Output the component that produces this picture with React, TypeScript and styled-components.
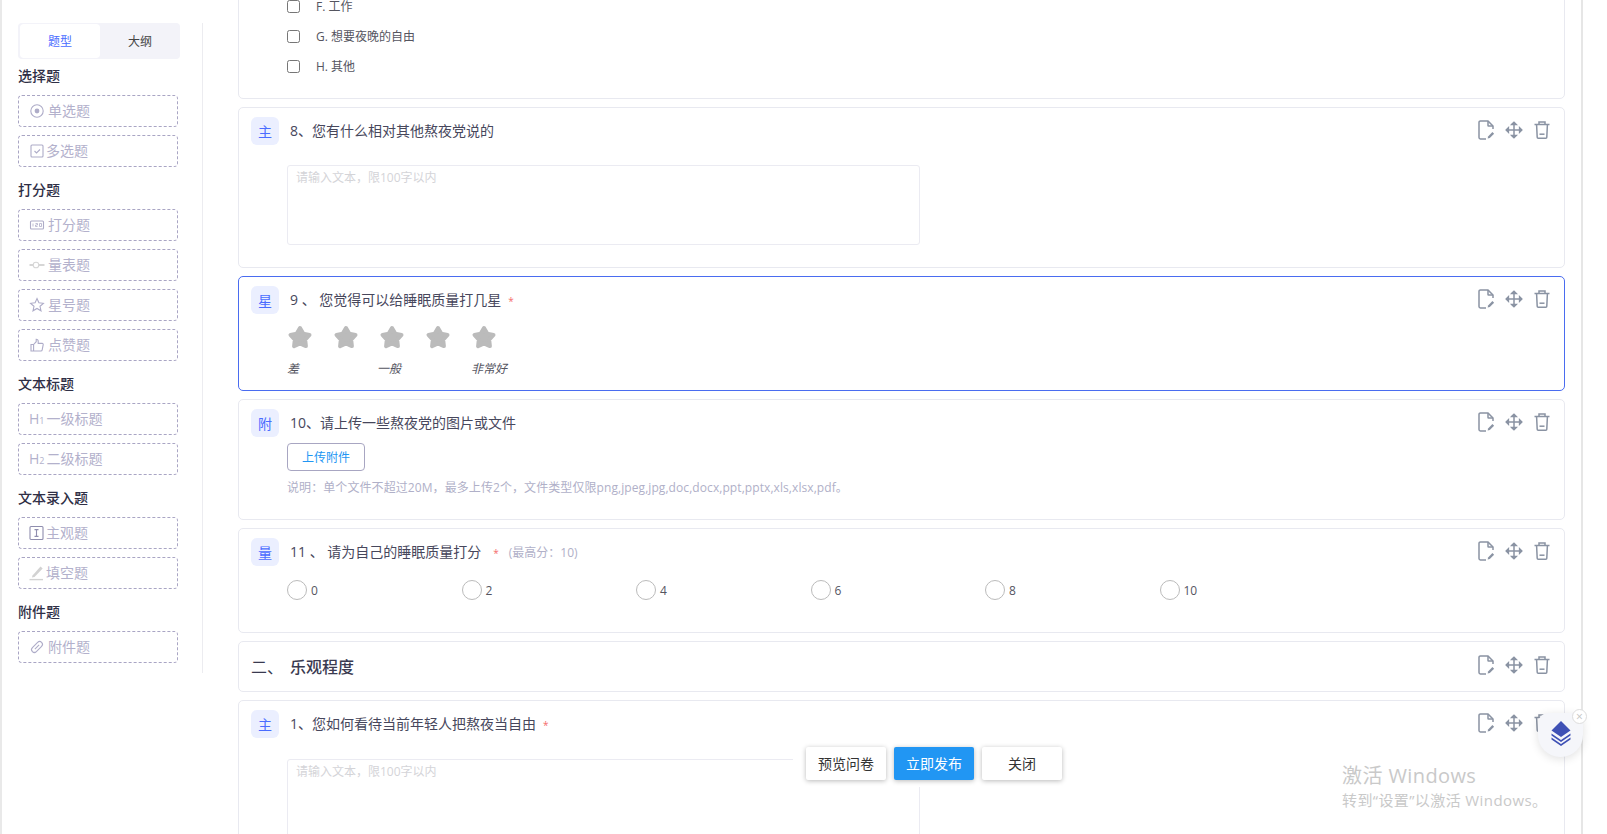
import React from 'react';
import styled, { createGlobalStyle } from 'styled-components';

const GlobalStyle = createGlobalStyle`
  html, body { margin: 0; padding: 0; height: 834px; overflow: hidden; background: #fff; }
  body { font-family: "Open Sans", "Noto Sans CJK SC", sans-serif; }
  * { box-sizing: border-box; }
`;

type IconName = 'radio' | 'check' | 'score' | 'scale' | 'star' | 'thumb' | 'input' | 'pen' | 'clip';

// 左侧题型图标
const SideIcon: React.FC<{ name: IconName }> = ({ name }) => {
  const common = { fill: 'none', stroke: '#aeacc8', strokeWidth: 1.1 };
  return (
    <IconSvg viewBox="0 0 16 16">
      {name === 'radio' && (
        <>
          <circle cx="8" cy="8" r="6.2" {...common} />
          <circle cx="8" cy="8" r="2.4" fill="#aeacc8" />
        </>
      )}
      {name === 'check' && (
        <>
          <rect x="2" y="2" width="12" height="12" rx="1" {...common} />
          <path d="M5.5 8l2 2 3.5-3.5" {...common} />
        </>
      )}
      {name === 'score' && (
        <>
          <rect x="1.5" y="4" width="13" height="8" rx="1" {...common} />
          <path d="M4 6.5v3M6.5 6.5h2v1.5h-2v1.5h2M10.5 6.5h2v3h-2z" {...common} strokeWidth={0.8} />
        </>
      )}
      {name === 'scale' && (
        <>
          <path d="M0.5 8h15" fill="none" stroke="#d6d6d6" strokeWidth={2} />
          <circle cx="7" cy="8" r="2.8" fill="#fff" stroke="#d6d6d6" strokeWidth={1.1} />
        </>
      )}
      {name === 'star' && (
        <path d="M8 1.6l1.9 4.2 4.5.5-3.4 3 1 4.5L8 11.5l-4 2.3 1-4.5-3.4-3 4.5-.5z" {...common} />
      )}
      {name === 'thumb' && (
        <path d="M2 7.5h2.6v6.5H2zM4.6 7.5l2.6-2.8V2.2c1.5 0 2 1 2 2v2.2h4c.7 0 1.1.6 1 1.2l-1 5.2c-.1.7-.6 1.2-1.3 1.2H4.6" {...common} />
      )}
      {name === 'input' && (
        <>
          <rect x="1" y="1.5" width="13" height="13" rx="1" {...common} stroke="#8f8dae" />
          <path d="M5.5 4.6h4M5.5 11.4h4M7.5 4.6v6.8" {...common} stroke="#8f8dae" />
        </>
      )}
      {name === 'pen' && (
        <>
          <path d="M3.5 10.5L11.5 1.5l2.2 2-8.2 8.4-2.6.6z" fill="#d2d2d2" />
          <path d="M0.5 14.6h13.5" stroke="#d2d2d2" strokeWidth={1.4} />
        </>
      )}
      {name === 'clip' && (
        <g transform="rotate(-45 8 8)">
          <rect x="1.5" y="5.2" width="13" height="5.6" rx="2.8" {...common} />
          <path d="M5 8h6" {...common} />
        </g>
      )}
    </IconSvg>
  );
};

const Actions: React.FC<{ $lift?: number }> = ({ $lift }) => (
  <ActionWrap $lift={$lift}>
    <svg width="17" height="20" viewBox="0 0 17 20" fill="none" stroke="#8a93a3" strokeWidth="1.5">
      <path d="M15 9V6l-5-5H2.4C1.6 1 1 1.6 1 2.4v15.2c0 .8.6 1.4 1.4 1.4H8" />
      <path d="M10 1v4.6c0 .3.2.5.5.5H15" />
      <path d="M9.6 18.6l.5-2.2 4.3-4.4 1.7 1.7-4.3 4.4z" fill="#8a93a3" stroke="none" />
    </svg>
    <svg width="18" height="18" viewBox="0 0 18 18" fill="none" stroke="#8a93a3" strokeWidth="1.5">
      <path d="M9 1.5v15M1.5 9h15" />
      <path d="M6.8 3.4L9 1.2l2.2 2.2zM6.8 14.6L9 16.8l2.2-2.2zM3.4 6.8L1.2 9l2.2 2.2zM14.6 6.8L16.8 9l-2.2 2.2z" fill="#8a93a3" />
    </svg>
    <svg width="16" height="18" viewBox="0 0 16 18" fill="none" stroke="#8a93a3" strokeWidth="1.5">
      <path d="M0.5 3.6h15M5 3.4V1h6v2.4" />
      <path d="M2.6 3.8l.6 12.4c0 .6.4 1 1 1h7.6c.6 0 1-.4 1-1l.6-12.4" />
      <path d="M5.5 13.2h5" />
    </svg>
  </ActionWrap>
);

const Head: React.FC<{ badge: string; children: React.ReactNode }> = ({ badge, children }) => (
  <HeadRow>
    <Badge>{badge}</Badge>
    <Title>{children}</Title>
    <Actions />
  </HeadRow>
);

const StarIcon: React.FC = () => (
  <svg width="26" height="26" viewBox="0 0 26 26">
    <path
      d="M13 4l3.2 5.6 6.3 1.3-4.3 4.8.7 6.4L13 19.5l-5.9 2.6.7-6.4-4.3-4.8 6.3-1.3z"
      fill="#bbbbbb"
      stroke="#bbbbbb"
      strokeWidth="4"
      strokeLinejoin="round"
    />
  </svg>
);

type SideItem = { label: string; icon?: IconName; prefix?: React.ReactNode; gap?: number };

const groups: { title: string; items: SideItem[] }[] = [
  { title: '选择题', items: [{ label: '单选题', icon: 'radio' }, { label: '多选题', icon: 'check', gap: 1 }] },
  {
    title: '打分题',
    items: [
      { label: '打分题', icon: 'score' },
      { label: '量表题', icon: 'scale' },
      { label: '星号题', icon: 'star' },
      { label: '点赞题', icon: 'thumb' },
    ],
  },
  {
    title: '文本标题',
    items: [
      { label: '一级标题', prefix: <>H<small>1</small></>, gap: 2 },
      { label: '二级标题', prefix: <>H<small>2</small></>, gap: 2 },
    ],
  },
  {
    title: '文本录入题',
    items: [
      { label: '主观题', icon: 'input', gap: 1 },
      { label: '填空题', icon: 'pen', gap: 1 },
    ],
  },
  { title: '附件题', items: [{ label: '附件题', icon: 'clip' }] },
];

const scores = [0, 2, 4, 6, 8, 10];

const App: React.FC = () => (
  <Page>
    <GlobalStyle />
    <Sidebar>
      <Tabs>
        <Tab $active>题型</Tab>
        <Tab>大纲</Tab>
      </Tabs>
      {groups.map((group) => (
        <Group key={group.title}>
          <GroupTitle>{group.title}</GroupTitle>
          {group.items.map((item) => (
            <DragItem key={item.label} $gap={item.gap}>
              {item.icon ? <SideIcon name={item.icon} /> : <HeadingMark>{item.prefix}</HeadingMark>}
              {item.label}
            </DragItem>
          ))}
        </Group>
      ))}
    </Sidebar>

    <Main>
      <ClippedCard>
        <Indented>
          {['F. 工作', 'G. 想要夜晚的自由', 'H. 其他'].map((text) => (
            <CheckRow key={text}>
              <CheckBox />
              {text}
            </CheckRow>
          ))}
        </Indented>
      </ClippedCard>

      <Card $bottom={22}>
        <Head badge="主">8、您有什么相对其他熬夜党说的</Head>
        <TextBox>请输入文本，限100字以内</TextBox>
      </Card>

      <Card $active $bottom={12}>
        <Head badge="星">
          9 、 您觉得可以给睡眠质量打几星<Required>*</Required>
        </Head>
        <Stars>
          {[0, 1, 2, 3, 4].map((i) => (
            <StarIcon key={i} />
          ))}
        </Stars>
        <StarLabels>
          <span>差</span>
          <span>一般</span>
          <span>非常好</span>
        </StarLabels>
      </Card>

      <Card $bottom={21}>
        <Head badge="附">10、请上传一些熬夜党的图片或文件</Head>
        <UploadButton>上传附件</UploadButton>
        <UploadHint>说明：单个文件不超过20M，最多上传2个，文件类型仅限png,jpeg,jpg,doc,docx,ppt,pptx,xls,xlsx,pdf。</UploadHint>
      </Card>

      <Card $bottom={32}>
        <Head badge="量">
          11 、 请为自己的睡眠质量打分<Required $gap={12}>*</Required>
          <MaxScore>(最高分：10)</MaxScore>
        </Head>
        <RadioRow>
          {scores.map((score) => (
            <RadioItem key={score}>
              <RadioCircle />
              {score}
            </RadioItem>
          ))}
        </RadioRow>
      </Card>

      <SectionCard>
        <SectionTitle>
          <span>二、</span>乐观程度
        </SectionTitle>
        <Actions $lift={4} />
      </SectionCard>

      <Card $bottom={22}>
        <Head badge="主">
          1、您如何看待当前年轻人把熬夜当自由<Required>*</Required>
        </Head>
        <TextBox $top={21}>请输入文本，限100字以内</TextBox>
      </Card>
    </Main>

    <BottomBar>
      <BarButton>预览问卷</BarButton>
      <BarButton $primary>立即发布</BarButton>
      <BarButton>关闭</BarButton>
    </BottomBar>

    <FloatWidget>
      <CloseDot>×</CloseDot>
      <svg width="22" height="26" viewBox="0 0 22 26" fill="#3f51b5">
        <path d="M11 1l9.5 9.5L11 17 1.5 10.5z" />
        <path d="M1.5 13.5L11 20l9.5-6.5v2L11 22 1.5 15.5z" />
        <path d="M1.5 17.5L11 24l9.5-6.5v2L11 26 1.5 19.5z" />
      </svg>
    </FloatWidget>

    <Watermark>
      <strong>激活 Windows</strong>
      <span>转到“设置”以激活 Windows。</span>
    </Watermark>
  </Page>
);

const Page = styled.div`
  position: relative;
  display: flex;
  width: 1583px;
  height: 834px;
  background: #fff;
  border-left: 2px solid #e9e9e9;
  border-right: 2px solid #e6e6e6;
`;

const Sidebar = styled.aside`
  flex: none;
  align-self: flex-start;
  width: 201px;
  margin-top: 23px;
  padding: 0 0 10px 16px;
  border-right: 1px solid #ececf0;
`;

const Tabs = styled.div`
  display: flex;
  width: 162px;
  height: 36px;
  padding: 1px 0 1px 2px;
  background: #f3f3f9;
  border-radius: 4px;
`;

const Tab = styled.div<{ $active?: boolean }>`
  flex: 1;
  display: flex;
  align-items: center;
  justify-content: center;
  padding-bottom: 1px;
  font-size: 12px;
  border-radius: 4px;
  color: ${(p) => (p.$active ? '#4a6cff' : '#444')};
  background: ${(p) => (p.$active ? '#fff' : 'transparent')};
`;

const Group = styled.section`
  margin-top: 13px;
  &:nth-of-type(1) { margin-top: 7px; }
`;

const GroupTitle = styled.h4`
  margin: 0 0 9px;
  height: 20px;
  font-size: 14px;
  line-height: 20px;
  font-weight: 500;
  color: #2f2f46;
`;

const DragItem = styled.div<{ $gap?: number }>`
  display: flex;
  align-items: center;
  gap: ${(p) => p.$gap ?? 3}px;
  width: 160px;
  height: 32px;
  margin-bottom: 8px;
  padding: 0 0 2px 10px;
  font-size: 14px;
  color: #b3b1cc;
  border: 1px dashed #a9a5c4;
  border-radius: 4px;
  &:last-child { margin-bottom: 0; }
`;

const IconSvg = styled.svg`
  flex: none;
  width: 16px;
  height: 16px;
  margin-top: 2px;
`;

const HeadingMark = styled.span`
  font-size: 14px;
  small { font-size: 9px; }
`;

const Main = styled.main`
  flex: none;
  display: flex;
  flex-direction: column;
  gap: 8px;
  width: 1327px;
  margin-left: 35px;
  margin-top: -30px;
`;

const Card = styled.div<{ $active?: boolean; $bottom?: number }>`
  flex: none;
  padding: 9px 14px ${(p) => p.$bottom ?? 20}px 12px;
  background: #fff;
  border: 1px solid ${(p) => (p.$active ? '#4a6cf0' : '#e8e9f0')};
  border-radius: 5px;
`;

const ClippedCard = styled(Card)`
  height: 129px;
  padding-top: 20px;
`;

const SectionCard = styled(Card)`
  display: flex;
  align-items: center;
  justify-content: space-between;
  height: 51px;
  padding-top: 0;
  padding-bottom: 0;
`;

const HeadRow = styled.div`
  display: flex;
  align-items: center;
  gap: 11px;
  height: 28px;
`;

const Badge = styled.div`
  flex: none;
  display: flex;
  align-items: center;
  justify-content: center;
  width: 28px;
  height: 28px;
  padding-bottom: 1px;
  font-size: 14px;
  color: #4a6cff;
  background: #ebefff;
  border-radius: 6px;
`;

const Title = styled.div`
  flex: 1;
  padding-bottom: 2px;
  font-size: 14px;
  color: #47475c;
  white-space: pre;
`;

const Required = styled.span<{ $gap?: number }>`
  margin-left: ${(p) => p.$gap ?? 7}px;
  font-size: 10px;
  color: #f56c6c;
`;

const MaxScore = styled.span`
  margin-left: 10px;
  font-size: 12px;
  color: #b0b0c8;
`;

const ActionWrap = styled.div<{ $lift?: number }>`
  flex: none;
  display: flex;
  align-items: center;
  gap: 11px;
  padding-bottom: ${(p) => p.$lift ?? 2}px;
  svg:first-child { margin-right: -1px; }
`;

const Indented = styled.div`
  margin-left: 36px;
`;

const CheckRow = styled.label`
  display: flex;
  align-items: center;
  gap: 16px;
  height: 30px;
  font-size: 12px;
  color: #55555f;
`;

const CheckBox = styled.span`
  flex: none;
  width: 13px;
  height: 13px;
  border: 1px solid #767676;
  border-radius: 2.5px;
`;

const TextBox = styled.div<{ $top?: number }>`
  width: 633px;
  height: 80px;
  margin: ${(p) => p.$top ?? 20}px 0 0 36px;
  padding: 3px 8px;
  font-size: 12px;
  line-height: 18px;
  color: #d4d4d8;
  border: 1px solid #ebebf2;
  border-radius: 3px;
`;

const Stars = styled.div`
  display: flex;
  gap: 20px;
  margin: 10px 0 0 36px;
`;

const StarLabels = styled.div`
  display: grid;
  grid-template-columns: 90px 94px auto;
  margin: 10px 0 0 36px;
  font-size: 12px;
  line-height: 18px;
  font-style: italic;
  color: #55555f;
`;

const UploadButton = styled.button`
  display: block;
  width: 78px;
  height: 28px;
  margin: 6px 0 0 36px;
  padding: 0 0 1px;
  font: inherit;
  font-size: 12px;
  color: #2196f3;
  background: #fff;
  border: 1px solid #a8a6c2;
  border-radius: 4px;
`;

const UploadHint = styled.div`
  margin: 7px 0 0 36px;
  font-size: 12px;
  line-height: 20px;
  letter-spacing: 0.08px;
  color: #b0b0c8;
`;

const RadioRow = styled.div`
  display: grid;
  grid-template-columns: repeat(6, 174.5px);
  margin: 14px 0 0 36px;
`;

const RadioItem = styled.div`
  display: flex;
  align-items: center;
  gap: 4px;
  height: 20px;
  font-size: 12px;
  color: #55555f;
`;

const RadioCircle = styled.span`
  width: 20px;
  height: 20px;
  border: 1px solid #bbbbbb;
  border-radius: 50%;
`;

const SectionTitle = styled.div`
  padding-bottom: 2px;
  font-size: 16px;
  font-weight: 500;
  color: #3a3a50;
  span { margin-right: 7px; font-weight: 400; }
`;

const BottomBar = styled.div`
  position: absolute;
  left: 791px;
  top: 740px;
  display: flex;
  align-items: center;
  gap: 8px;
  width: 280px;
  height: 47px;
  padding-left: 13px;
  background: #fff;
`;

const BarButton = styled.button<{ $primary?: boolean }>`
  width: 80px;
  height: 33px;
  padding: 0 0 2px;
  font: inherit;
  font-size: 14px;
  color: ${(p) => (p.$primary ? '#fff' : '#333')};
  background: ${(p) => (p.$primary ? '#2196f3' : '#fff')};
  border: 0;
  border-radius: 2px;
  box-shadow: 0 1px 5px rgba(0, 0, 0, 0.28);
`;

const FloatWidget = styled.div`
  position: absolute;
  left: 1536px;
  top: 713px;
  display: flex;
  align-items: center;
  justify-content: center;
  width: 45px;
  height: 44px;
  padding-bottom: 4px;
  background: #f5f6fa;
  border-radius: 10px 10px 22px 22px;
  box-shadow: 0 2px 10px rgba(0, 0, 0, 0.12);
`;

const CloseDot = styled.span`
  position: absolute;
  top: -4px;
  right: -4px;
  display: flex;
  align-items: center;
  justify-content: center;
  width: 15px;
  height: 15px;
  font-size: 12px;
  line-height: 1;
  color: #c4c4c4;
  background: #fff;
  border: 1px solid #dddddd;
  border-radius: 50%;
`;

const Watermark = styled.div`
  position: absolute;
  left: 1340px;
  top: 762px;
  display: flex;
  flex-direction: column;
  color: #c9c9c9;
  letter-spacing: 0.4px;
  strong { font-size: 20px; line-height: 28px; font-weight: 400; }
  span { font-size: 15px; line-height: 20px; }
`;

export default App;
